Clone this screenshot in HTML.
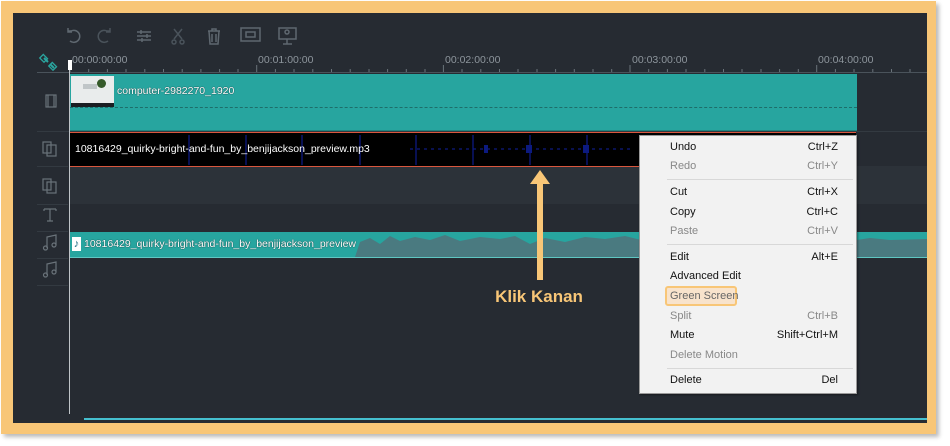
<!DOCTYPE html>
<html><head><meta charset="utf-8"><style>
body{margin:0;width:950px;height:446px;background:#fff;position:relative;overflow:hidden;font-family:"Liberation Sans",sans-serif}
.a{position:absolute}
.frame{left:1px;top:1px;width:935px;height:433px;background:#f8c677;box-shadow:3px 3px 4px #bbb}
.dark{left:13px;top:13px;width:914px;height:410px;background:#262b32}
.t{font-size:10.5px;color:#8d959c}
.mi{position:absolute;left:670px;font-size:11px;color:#111}
.sc{position:absolute;right:112px;font-size:11px;color:#111}
.g{color:#888}
.sep{position:absolute;left:667px;width:186px;height:1px;background:#d8d8d8}
.ic{stroke:#5f6870;fill:none;stroke-width:1.5}
</style></head><body>
<div class="a frame"></div>
<div class="a dark"></div>
<svg class="a" style="left:60px;top:24px" width="250" height="24">
<g class="ic">
<path d="M10 17 A6 6 0 1 0 11 7 L8 7 M8 4 L8 8 L12 8"/>
<path d="M48 17 A6 6 0 1 1 47 7 L50 7 M50 4 L50 8 L46 8" stroke="#4a535b"/>
<path d="M77 8 H91 M77 12 H91 M77 16 H91"/><path d="M81 6v4M87 10v4M82 14v4"/>
<path d="M114 5 L122 15 M122 5 L114 15" stroke="#4a535b"/><circle cx="114" cy="18" r="2" stroke="#4a535b"/><circle cx="122" cy="18" r="2" stroke="#4a535b"/>
<path d="M148 7 H160 M152 7 V5 H156 V7 M149 7 L150 20 H158 L159 7 M152 10v8M156 10v8"/>
<rect x="181" y="4" width="19" height="13"/><rect x="186" y="8" width="9" height="5"/>
<rect x="219" y="4" width="17" height="11"/><path d="M227 15 V20 M223 20 H232"/><circle cx="227" cy="8" r="2"/>
</g></svg>
<svg class="a" style="left:37px;top:52px" width="890" height="22">
<path d="M7 6 L11 10 M13 12 L17 16" stroke="#2aa6a0" stroke-width="2" fill="none"/>
<rect x="4" y="4" width="6" height="5" transform="rotate(45 7 6)" fill="none" stroke="#2aa6a0" stroke-width="1.3"/>
<rect x="13" y="12" width="6" height="5" transform="rotate(45 16 14)" fill="none" stroke="#2aa6a0" stroke-width="1.3"/>
<line x1="0" y1="20.5" x2="890" y2="20.5" stroke="#4a535b"/>
<g stroke="#6a737a">
<path d="M33 14v6M219.7 13v7M406.4 13v7M593 13v7M779.7 13v7"/>
<path d="M51.7 17v3M70.4 17v3M89 17v3M107.8 17v3M126.5 17v3M145.2 17v3M163.9 17v3M182.6 17v3M201 17v3M238.4 17v3M257 17v3M275.8 17v3M294.5 17v3M313.2 17v3M332 17v3M350.6 17v3M369.3 17v3M388 17v3M425 17v3M443.8 17v3M462.5 17v3M481 17v3M500 17v3M518.6 17v3M537.3 17v3M556 17v3M574.7 17v3M611.7 17v3M630.4 17v3M649 17v3M667.8 17v3M686.5 17v3M705 17v3M724 17v3M742.6 17v3M761.3 17v3M798.4 17v3M817 17v3M835.8 17v3M854.5 17v3M873 17v3"/></g>
</svg>
<div class="a t" style="left:72px;top:54px">00:00:00:00</div>
<div class="a t" style="left:258px;top:54px">00:01:00:00</div>
<div class="a t" style="left:445px;top:54px">00:02:00:00</div>
<div class="a t" style="left:632px;top:54px">00:03:00:00</div>
<div class="a t" style="left:818px;top:54px">00:04:00:00</div>
<div class="a" style="left:70px;top:166px;width:857px;height:38px;background:#2c3239"></div>
<div class="a" style="left:37px;top:131px;width:890px;height:1px;background:#333a41"></div>
<div class="a" style="left:37px;top:166px;width:31px;height:1px;background:#333a41"></div>
<div class="a" style="left:37px;top:204px;width:31px;height:1px;background:#333a41"></div>
<div class="a" style="left:37px;top:231px;width:31px;height:1px;background:#333a41"></div>
<div class="a" style="left:37px;top:258px;width:31px;height:1px;background:#333a41"></div>
<div class="a" style="left:37px;top:285px;width:31px;height:1px;background:#333a41"></div>
<svg class="a" style="left:37px;top:90px" width="31" height="200"><g stroke="#6a737a" fill="none" stroke-width="1.2">
<rect x="9" y="5" width="10" height="12"/><path d="M11 5v12M17 5v12"/>
<rect x="6" y="52" width="8" height="11"/><rect x="10" y="55" width="9" height="11"/>
<rect x="6" y="89" width="8" height="11"/><rect x="10" y="92" width="9" height="11"/>
<path d="M7 119 H19 M13 119 V131 M10 131 H16 M7 119v2M19 119v2"/>
<path d="M10 158 V147 L19 145 V155"/><circle cx="8.5" cy="158" r="2"/><circle cx="17" cy="155" r="2"/>
<path d="M10 185 V174 L19 172 V182"/><circle cx="8.5" cy="185" r="2"/><circle cx="17" cy="182" r="2"/>
</g></svg>
<div class="a" style="left:70px;top:74px;width:787px;height:56px;background:#27a59f;border-bottom:1px solid #1f8580"></div>
<div class="a" style="left:70px;top:107px;width:787px;border-top:1px dashed #1d6e6a"></div>
<div class="a" style="left:71px;top:76px;width:43px;height:31px;background:#e9ecec"><div class="a" style="left:26px;top:3px;width:9px;height:9px;border-radius:50%;background:#355a2a"></div><div class="a" style="left:12px;top:8px;width:14px;height:5px;background:#c0c6c8"></div><div class="a" style="left:0;top:27px;width:43px;height:4px;background:#1a1e22"></div></div>
<div class="a" style="left:117px;top:85px;font-size:10.5px;color:#fff;text-shadow:0 0 1px #000">computer-2982270_1920</div>
<div class="a" style="left:70px;top:132px;width:786px;height:33px;background:#000;border-top:1px solid #d9573e;border-bottom:1px solid #d9573e"></div>
<svg class="a" style="left:70px;top:133px" width="600" height="33"><g stroke="#0c1a80" stroke-width="1.3">
<path d="M119 2v30M176 2v30M232 2v30M290 2v30M346 2v30M403 2v30M460 2v30M517 2v30M589 2v30"/>
<path d="M340 16H560M580 16h40" stroke-dasharray="3 4"/></g>
<rect x="414" y="12" width="4" height="8" fill="#0c1a80"/><rect x="456" y="12" width="6" height="8" fill="#0c1a80"/><rect x="513" y="12" width="6" height="8" fill="#0c1a80"/></svg>
<div class="a" style="left:75px;top:143px;font-size:10.5px;color:#fff">10816429_quirky-bright-and-fun_by_benjijackson_preview.mp3</div>
<div class="a" style="left:70px;top:232px;width:857px;height:25px;background:#27a59f;border-bottom:1px solid #5fc7c2"></div>
<svg class="a" style="left:70px;top:232px" width="857" height="25"><path d="M285 25 L290 10 L300 6 L310 12 L320 4 L330 9 L345 5 L360 8 L375 3 L390 9 L410 5 L430 7 L445 4 L460 12 L475 6 L495 10 L515 5 L535 7 L555 4 L575 9 L600 5 L620 8 L640 6 L660 10 L680 6 L700 9 L720 5 L740 8 L760 6 L780 9 L800 6 L820 8 L857 7 L857 25Z" fill="#4a7a80"/></svg>
<div class="a" style="left:72px;top:237px;width:9px;height:14px;background:#fff;color:#1a6a80;font-size:11px;line-height:14px;text-align:center">♪</div>
<div class="a" style="left:84px;top:238px;font-size:10.5px;color:#fff;text-shadow:0 0 1px #000">10816429_quirky-bright-and-fun_by_benjijackson_preview</div>
<div class="a" style="left:69px;top:62px;width:1px;height:352px;background:#bfc4c8"></div>
<div class="a" style="left:68px;top:60px;width:4px;height:10px;background:#fff"></div>
<div class="a" style="left:84px;top:418px;width:843px;height:2px;background:#45bfcf"></div>
<svg class="a" style="left:525px;top:168px" width="30" height="115"><path d="M15 2 L25 16 H18 V112 H12 V16 H5 Z" fill="#f8c677"/></svg>
<div class="a" style="left:480px;top:287px;width:118px;text-align:center;font-size:17px;font-weight:bold;color:#f8c677">Klik Kanan</div>
<div class="a" style="left:639px;top:135px;width:216px;height:257px;background:#f2f2f2;border:1px solid #999;box-shadow:1px 1px 2px rgba(0,0,0,.4)"></div>
<div class="mi" style="top:141px">Undo</div><div class="sc" style="top:141px">Ctrl+Z</div>
<div class="mi g" style="top:160px">Redo</div><div class="sc g" style="top:160px">Ctrl+Y</div>
<div class="sep" style="top:179px"></div>
<div class="mi" style="top:186px">Cut</div><div class="sc" style="top:186px">Ctrl+X</div>
<div class="mi" style="top:206px">Copy</div><div class="sc" style="top:206px">Ctrl+C</div>
<div class="mi g" style="top:225px">Paste</div><div class="sc g" style="top:225px">Ctrl+V</div>
<div class="sep" style="top:244px"></div>
<div class="mi" style="top:251px">Edit</div><div class="sc" style="top:251px">Alt+E</div>
<div class="mi" style="top:270px">Advanced Edit</div>
<div class="a" style="left:665px;top:286px;width:72px;height:20px;border:2px solid #f8c677;border-radius:3px;background:#f8e3cc;box-sizing:border-box"></div>
<div class="mi" style="top:290px;color:#666">Green Screen</div>
<div class="mi g" style="top:310px">Split</div><div class="sc g" style="top:310px">Ctrl+B</div>
<div class="mi" style="top:329px">Mute</div><div class="sc" style="top:329px">Shift+Ctrl+M</div>
<div class="mi g" style="top:349px">Delete Motion</div>
<div class="sep" style="top:368px"></div>
<div class="mi" style="top:374px">Delete</div><div class="sc" style="top:374px">Del</div>
</body></html>
